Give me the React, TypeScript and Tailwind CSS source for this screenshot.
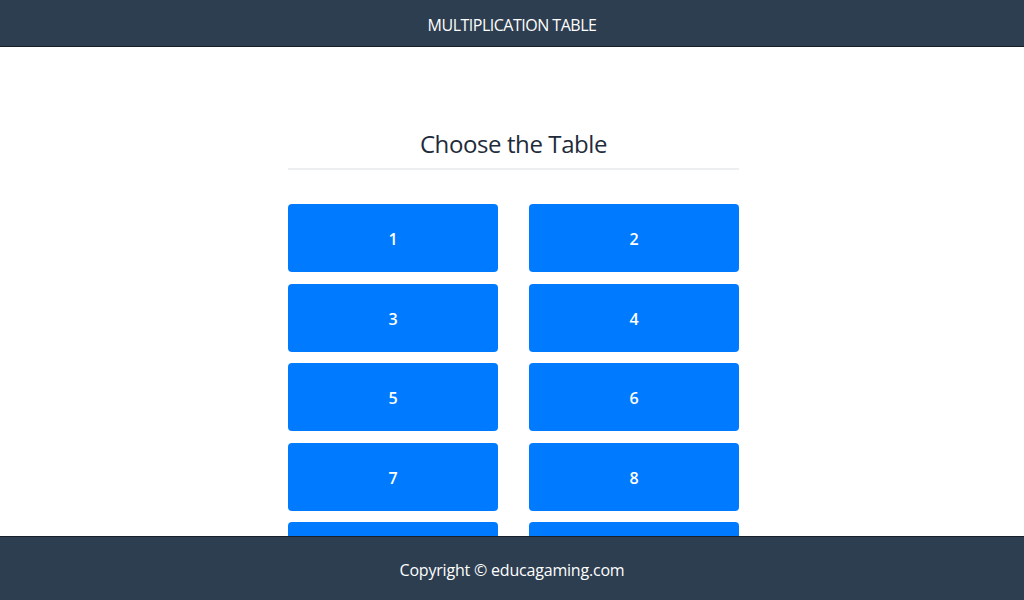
const tables = [1, 2, 3, 4, 5, 6, 7, 8, 9, 10];

export default function App() {
  return (
    <div className="min-h-[600px] bg-white" style={{ fontFamily: '"Open Sans", "Noto Sans", sans-serif' }}>
      {/* Header */}
      <header className="h-[47px] pt-[3px] bg-[#2d3e50] border-b border-[#17202a] flex items-center justify-center">
        <h1 className="text-white text-[16px] tracking-[-0.5px]">MULTIPLICATION TABLE</h1>
      </header>

      {/* Content */}
      <main className="flex justify-center pl-[3px] pt-[78px] pb-[80px]">
        <div className="w-[451px]">
          <h2 className="text-center text-[24px] text-[#1e2b3a] tracking-[-0.4px] leading-[36px] pt-[1px]">
            Choose the Table
          </h2>
          <div className="mt-[6px] h-[2px] bg-[#eceef0]" />
          <div className="mt-[34px] grid grid-cols-2 gap-x-[31px] gap-y-[11.5px]">
            {tables.map((n) => (
              <button
                key={n}
                className="h-[68px] pt-[2px] rounded-[4px] bg-[#007bff] text-white text-[16px] font-semibold"
              >
                {n}
              </button>
            ))}
          </div>
        </div>
      </main>

      {/* Footer */}
      <footer className="fixed bottom-0 left-0 right-0 h-[64px] pt-[2px] bg-[#2d3e50] border-t border-[#17202a] flex items-center justify-center">
        <p className="text-white text-[16px] tracking-[-0.2px]">Copyright © educagaming.com</p>
      </footer>
    </div>
  );
}
